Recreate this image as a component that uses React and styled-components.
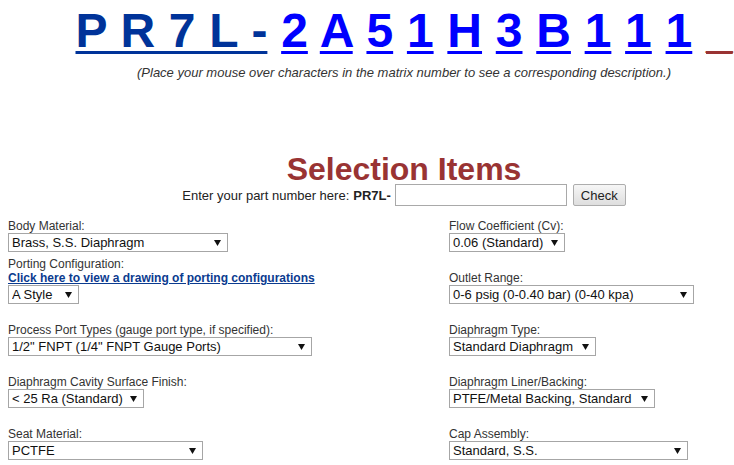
import React from 'react';
import styled, { createGlobalStyle } from 'styled-components';

const Global = createGlobalStyle`
  html, body { margin: 0; padding: 0; background: #fff; overflow: hidden; }
  body { font-family: "Liberation Sans", Arial, sans-serif; color: #222; }
`;

const Page = styled.div`
  width: 792px;
  padding: 0 8px;
`;

const Matrix = styled.div`
  margin-top: 3px;
  padding-left: 67.5px;
  font-size: 48px;
  font-weight: bold;
  line-height: 56px;
  word-spacing: 0.4px;
  white-space: nowrap;
`;

const MatrixLink = styled.a`
  color: ${p => (p.$prefix ? '#003399' : '#0000ff')};
  text-decoration: underline;
  text-decoration-thickness: 3px;
  text-underline-offset: 4px;
  cursor: pointer;
`;

const Blank = styled.span`
  color: #993333;
  text-decoration: underline;
  text-decoration-thickness: 3px;
  text-underline-offset: 4px;
`;

const Note = styled.div`
  margin-top: 6px;
  text-align: center;
  font-size: 13px;
  line-height: 15px;
  font-style: italic;
  color: #333;
`;

const Heading = styled.h2`
  margin: 74px 0 0;
  text-align: center;
  font-size: 32px;
  line-height: 30px;
  font-weight: bold;
  color: #993333;
`;

const CheckLine = styled.div`
  display: flex;
  justify-content: center;
  align-items: center;
  height: 22px;
  font-size: 13px;
  color: #222;
`;

const Prefix = styled.b`
  margin-left: 4px;
  margin-right: 4px;
`;

const PartInput = styled.input`
  box-sizing: border-box;
  width: 172px;
  height: 22px;
  margin: 0;
  border: 1px solid #a9a9a9;
  padding: 1px 3px;
  font: 13px "Liberation Sans", Arial, sans-serif;
`;

const CheckButton = styled.button`
  box-sizing: border-box;
  height: 22px;
  margin-left: 6px;
  padding: 0 7px;
  border: 1px solid #adadad;
  border-radius: 2px;
  background: linear-gradient(#f6f6f6, #dedede);
  font: 13px "Liberation Sans", Arial, sans-serif;
  color: #222;
`;

const Form = styled.div`
  margin-top: 13px;
`;

const Row = styled.div`
  display: grid;
  grid-template-columns: 441px 1fr;
  align-items: end;
  margin-top: ${p => p.$gap || 0}px;
`;

const Field = styled.div`
  display: flex;
  flex-direction: column;
  align-items: flex-start;
`;

const Label = styled.div`
  font-size: 12px;
  line-height: 14px;
  color: #333;
`;

const DrawingLink = styled.a`
  font-size: 12px;
  line-height: 14px;
  font-weight: bold;
  color: #0b3b8f;
  text-decoration: underline;
  cursor: pointer;
`;

const SelectWrap = styled.div`
  position: relative;
  display: flex;
`;

const Select = styled.select`
  box-sizing: border-box;
  appearance: none;
  -webkit-appearance: none;
  width: ${p => p.$w}px;
  height: 19px;
  margin: 0;
  padding: 0 16px 0 3px;
  border: 1px solid #a6a6a6;
  border-radius: 0;
  background: #fff;
  font: 13px "Liberation Sans", Arial, sans-serif;
  line-height: 17px;
  color: #111;
`;

const Arrow = styled.svg`
  position: absolute;
  right: 7px;
  top: 7px;
  pointer-events: none;
`;

function Dropdown({ w, value }) {
  return (
    <SelectWrap>
      <Select $w={w} defaultValue={value}>
        <option>{value}</option>
      </Select>
      <Arrow width="7" height="6" viewBox="0 0 7 6">
        <path d="M0 0 H7 L3.5 6 Z" fill="#111" />
      </Arrow>
    </SelectWrap>
  );
}

function SelectField({ label, w, value, children }) {
  return (
    <Field>
      <Label>{label}</Label>
      {children}
      <Dropdown w={w} value={value} />
    </Field>
  );
}

const chars = ['2', 'A', '5', '1', 'H', '3', 'B', '1', '1', '1'];

export default function App() {
  return (
    <Page>
      <Global />
      <Matrix>
        <MatrixLink $prefix>P R 7 L -</MatrixLink>
        {chars.map((c, i) => (
          <React.Fragment key={i}>
            {' '}
            <MatrixLink>{c}</MatrixLink>
          </React.Fragment>
        ))}
        {' '}
        <Blank>_</Blank>
      </Matrix>
      <Note>(Place your mouse over characters in the matrix number to see a corresponding description.)</Note>
      <Heading>Selection Items</Heading>
      <CheckLine>
        Enter your part number here:<Prefix>PR7L-</Prefix>
        <PartInput type="text" />
        <CheckButton>Check</CheckButton>
      </CheckLine>
      <Form>
        <Row>
          <SelectField label="Body Material:" w={220} value="Brass, S.S. Diaphragm" />
          <SelectField label="Flow Coefficient (Cv):" w={116} value="0.06 (Standard)" />
        </Row>
        <Row $gap={5}>
          <SelectField label="Porting Configuration:" w={71} value="A Style">
            <DrawingLink>Click here to view a drawing of porting configurations</DrawingLink>
          </SelectField>
          <SelectField label="Outlet Range:" w={245} value="0-6 psig (0-0.40 bar) (0-40 kpa)" />
        </Row>
        <Row $gap={19}>
          <SelectField label="Process Port Types (gauge port type, if specified):" w={304} value={'1/2" FNPT (1/4" FNPT Gauge Ports)'} />
          <SelectField label="Diaphragm Type:" w={147} value="Standard Diaphragm" />
        </Row>
        <Row $gap={19}>
          <SelectField label="Diaphragm Cavity Surface Finish:" w={136} value="< 25 Ra (Standard)" />
          <SelectField label="Diaphragm Liner/Backing:" w={206} value="PTFE/Metal Backing, Standard" />
        </Row>
        <Row $gap={19}>
          <SelectField label="Seat Material:" w={195} value="PCTFE" />
          <SelectField label="Cap Assembly:" w={239} value="Standard, S.S." />
        </Row>
      </Form>
    </Page>
  );
}
